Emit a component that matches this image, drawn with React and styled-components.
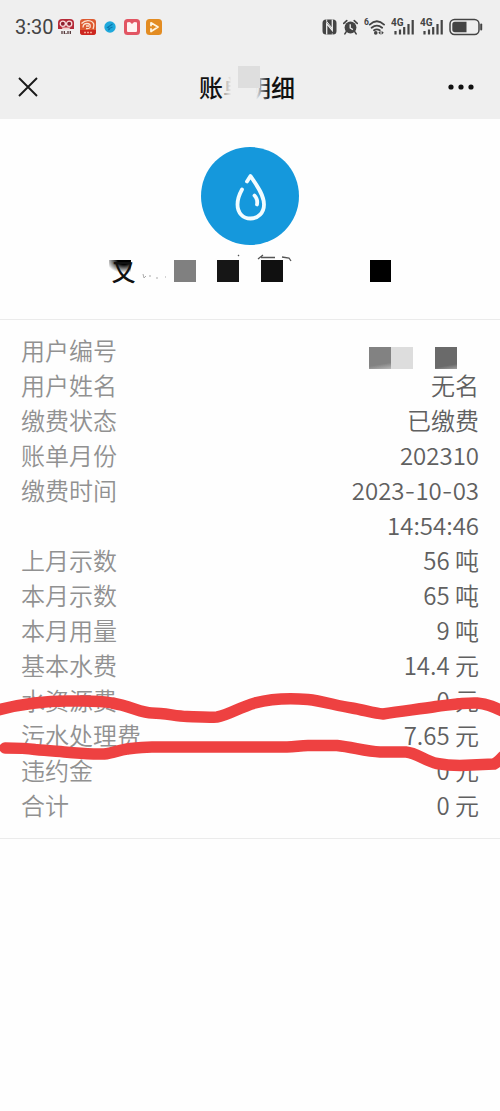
import React from "react";
import styled, { createGlobalStyle } from "styled-components";

const GlobalStyle = createGlobalStyle`
  * { box-sizing: border-box; }
  body {
    margin: 0;
    background: #fefefe;
    font-family: "Noto Sans CJK SC", sans-serif;
    overflow-x: hidden;
  }
`;

const Page = styled.main`
  position: relative;
  min-height: 100vh;
  background: #fefefe;
`;

const TopArea = styled.header`
  background: #efefef;
`;

const StatusBar = styled.div`
  display: flex;
  align-items: center;
  justify-content: space-between;
  height: 54px;
  padding: 0 17px 0 15px;
`;

const StatusGroup = styled.div`
  display: flex;
  align-items: center;
  gap: 6px;
`;

const Clock = styled.time`
  font: 400 20px/24px Roboto, sans-serif;
  color: #444;
  width: 37px;
  white-space: nowrap;
`;

const NavBar = styled.nav`
  display: flex;
  align-items: center;
  justify-content: space-between;
  height: 65px;
  padding: 0 23px 0 12px;
`;

const IconButton = styled.button`
  display: grid;
  place-items: center;
  width: 32px;
  height: 32px;
  padding: 0;
  border: 0;
  background: none;
`;

const Title = styled.h1`
  position: relative;
  margin: 0 0 0 5px;
  font-size: 24px;
  line-height: 30px;
  font-weight: 500;
  color: #111;
`;

const TitleFade = styled.span`
  position: absolute;
  inset: 0 26px 0 24px;
  background: linear-gradient(90deg, rgba(239, 239, 239, 0.6), #efefef 18%, #efefef 72%, rgba(239, 239, 239, 0));
`;

const TitleBlock = styled.span`
  position: absolute;
  left: 39px;
  top: -6px;
  width: 22px;
  height: 22px;
  background: #dedede;
`;

const Hero = styled.section`
  display: flex;
  flex-direction: column;
  align-items: center;
  gap: 15px;
  padding: 28px 0 37px;
  border-bottom: 1px solid #ebebeb;
`;

const Badge = styled.svg`
  display: block;
  width: 98px;
  height: 98px;
`;

const NameMosaic = styled.div`
  position: relative;
  display: grid;
  grid-template-columns: repeat(13, minmax(0, 1fr));
  width: 283px;
  height: 22px;
`;

const Cell = styled.span`
  height: 22px;
  background: ${(p) => p.$fill || "transparent"};
`;

const NameGlyph = styled.span`
  width: 28px;
  height: 22px;
  padding-left: 3px;
  font-size: 24px;
  line-height: 22px;
  font-weight: 500;
  color: #111;
  background: radial-gradient(ellipse 18px 13px at 15px 0, #000 35%, rgba(0, 0, 0, 0) 100%) no-repeat 0 0 / 22px 22px;
`;

const NameTraces = styled.svg`
  position: absolute;
  left: 0;
  top: -8px;
  width: 283px;
  height: 32px;
`;

const Details = styled.dl`
  position: relative;
  margin: 0;
  padding: 14px 21px;
  border-bottom: 1px solid #ebebeb;
`;

const Row = styled.div`
  display: flex;
  justify-content: space-between;
  font-size: 24px;
  font-weight: 350;
  line-height: 35px;
`;

const Label = styled.dt`
  height: 35px;
  line-height: 32px;
  color: #919191;
`;

const Value = styled.dd`
  display: flex;
  flex-direction: column;
  align-items: flex-end;
  justify-content: flex-end;
  margin: 0;
  color: #606060;
`;

const Line = styled.span`
  display: block;
  height: 35px;
  line-height: 32px;
`;

const WideDash = styled.span`
  font-family: Inter, sans-serif;
  line-height: 1;
`;

const ValueMosaic = styled.span`
  display: grid;
  grid-template-columns: repeat(5, 22px);
`;

const Marker = styled.svg`
  position: absolute;
  left: 0;
  top: 370px;
  width: 100%;
  height: 90px;
  pointer-events: none;
`;

const rows = [
  ["用户姓名", ["无名"]],
  ["缴费状态", ["已缴费"]],
  ["账单月份", ["202310"]],
  ["缴费时间", ["2023-10-03", "14:54:46"]],
  ["上月示数", ["56 吨"]],
  ["本月示数", ["65 吨"]],
  ["本月用量", ["9 吨"]],
  ["基本水费", ["14.4 元"]],
  ["水资源费", ["0 元"]],
  ["污水处理费", ["7.65 元"]],
  ["违约金", ["0 元"]],
  ["合计", ["0 元"]],
];

const nameCells = { 3: "#808080", 5: "#161616", 7: "#101010", 12: "#000" };

function withWideDashes(text) {
  return text.split("-").map((part, i) => (
    <React.Fragment key={i}>
      {i > 0 && <WideDash>-</WideDash>}
      {part}
    </React.Fragment>
  ));
}

function AppIcons() {
  return (
    <>
      <svg width="16" height="16" viewBox="0 0 16 16">
        <path d="M0 10V4q0-4 4-4h8q4 0 4 4v6z" fill="#b52a38" />
        <circle cx="4.8" cy="4.8" r="2.600" fill="#8e2030" stroke="#f7dcdc" strokeWidth="1.300" />
        <circle cx="11.2" cy="4.8" r="2.600" fill="#8e2030" stroke="#f7dcdc" strokeWidth="1.300" />
        <path d="M3.500 8.500h9L11 10.500H5z" fill="#f3d0d0" />
        <path d="M4 12v3M6.300 12v3M10 12v3M12.300 12v3" stroke="#4a2a2c" strokeWidth="1.200" />
        <path d="M7.600 14.500h1" stroke="#4a2a2c" />
      </svg>
      <svg width="16" height="16" viewBox="0 0 16 16">
        <rect width="16" height="16" rx="3" fill="#dd5a30" />
        <path d="M0 11h16v2q0 3-3 3H3q-3 0-3-3z" fill="#cc2620" />
        <path d="M1.500 4.500q4-4 9-2.500T13 10M3 8.500q0-4 4-4t3 4q-1 1.500-4 1M6 7h3" fill="none" stroke="#fbe3cf" strokeWidth="1.300" />
        <path d="M4 13.500h2M7 13.500h2M10 13.500h2" stroke="#f4a58f" strokeWidth="1.500" />
      </svg>
      <svg width="16" height="16" viewBox="0 0 16 16">
        <circle cx="8" cy="8" r="5.700" fill="#1fa9dc" />
        <path d="M10.500 5L5.500 8.500l2 1 3-1.500M8 10l-2 1" fill="none" stroke="#0b78ad" strokeWidth="1.100" />
      </svg>
      <svg width="16" height="16" viewBox="0 0 16 16">
        <rect width="16" height="16" rx="3.500" fill="#e25563" />
        <path d="M3 3.500q2.500-1 3.500 0L8 5l1.500-1.500q1-1 3.500 0V12q0 1-1 1H4q-1 0-1-1z" fill="#fff2f2" />
      </svg>
      <svg width="16" height="16" viewBox="0 0 16 16">
        <rect width="16" height="16" rx="3.500" fill="#e38c22" />
        <path d="M5 6.500V3.800l7 4.200-7 4.500v-2.500" fill="none" stroke="#fff4df" strokeWidth="1.800" strokeLinejoin="round" strokeLinecap="round" />
      </svg>
    </>
  );
}

function Signal() {
  return (
    <svg width="23" height="18" viewBox="0 0 23 18">
      <text x="0" y="8" fontFamily="Roboto, sans-serif" fontSize="10" fontWeight="700" fill="#444">4G</text>
      <path d="M4.500 16.500v-3.500M9 16.500v-5M13.200 16.500V9M17.500 16.500V6M21.700 16.500V2" stroke="#444" strokeWidth="2.200" />
    </svg>
  );
}

function SystemIcons() {
  return (
    <>
      <svg width="15" height="16" viewBox="0 0 15 16">
        <rect x="0.500" y="0.500" width="14" height="15" rx="3.500" fill="#444" />
        <path d="M4.700 15.500V4.500l5.600 7V.500" fill="none" stroke="#efefef" strokeWidth="1.300" />
        <path d="M4.700.500v2l5.600 7M10.300 15.500v-1" fill="none" stroke="#efefef" strokeWidth="1" />
      </svg>
      <svg width="15" height="16" viewBox="0 0 16 16">
        <circle cx="8" cy="8.500" r="6.300" fill="#444" />
        <path d="M.8 4.200L4 1.200M15.200 4.200L12 1.200M3.500 13L2 15.300M12.500 13l1.500 2.300" stroke="#444" strokeWidth="1.700" strokeLinecap="round" />
        <path d="M7.700 5v4l2.800 1.800" fill="none" stroke="#efefef" strokeWidth="1.400" />
      </svg>
      <svg width="21" height="18" viewBox="0 0 22 18">
        <text x="0" y="7" fontFamily="Roboto, sans-serif" fontSize="9" fontWeight="700" fill="#444">6</text>
        <path d="M6 6.500Q13.500-.5 21 6.500M8 9.800q5.500-4.600 11 0M10.500 12.500q3-2 6 0" fill="none" stroke="#444" strokeWidth="1.900" strokeLinecap="round" />
        <circle cx="12.300" cy="15.200" r="1.900" fill="#444" />
        <path d="M15 15l2.300-2v4zM20.700 15l-2.300-2v4z" fill="#444" />
      </svg>
      <Signal />
      <Signal />
      <svg width="34" height="18" viewBox="0 0 34 18">
        <rect x="1" y="1.500" width="29" height="15" rx="4.500" fill="none" stroke="#444" strokeWidth="1.500" />
        <path d="M6 3.800h11.500v10.400H6q-2.700 0-2.700-2.700v-5q0-2.700 2.700-2.700z" fill="#444" />
        <path d="M32.200 6.500v5" stroke="#444" strokeWidth="2" strokeLinecap="round" />
      </svg>
    </>
  );
}

export default function App() {
  return (
    <Page>
      <GlobalStyle />
      <TopArea>
        <StatusBar>
          <StatusGroup>
            <Clock>3:30</Clock>
            <AppIcons />
          </StatusGroup>
          <StatusGroup>
            <SystemIcons />
          </StatusGroup>
        </StatusBar>
        <NavBar>
          <IconButton aria-label="关闭">
            <svg width="20" height="20" viewBox="0 0 20 20">
              <path d="M1 1l18 18M19 1L1 19" stroke="#1a1a1a" strokeWidth="1.900" />
            </svg>
          </IconButton>
          <Title>
            账单明细
            <TitleFade />
            <TitleBlock />
          </Title>
          <IconButton aria-label="更多">
            <svg width="26" height="6" viewBox="0 0 26 6">
              <circle cx="3" cy="3" r="2.600" fill="#111" />
              <circle cx="13" cy="3" r="2.600" fill="#111" />
              <circle cx="23" cy="3" r="2.600" fill="#111" />
            </svg>
          </IconButton>
        </NavBar>
      </TopArea>

      <Hero>
        <Badge viewBox="0 0 98 98">
          <circle cx="49" cy="49" r="49" fill="#1598dc" />
          <path
            d="M46 34.500L49.500 29C54 36 63 47 63 57.500C63 66 57 71.500 49.500 71.500S36.500 66 36.500 57.500C36.500 52 38.500 47 41 42.500M53.500 48.500q3.500 3.500 2.500 9"
            fill="none" stroke="#f2fcff" strokeWidth="3.800" strokeLinecap="round" strokeLinejoin="round"
          />
        </Badge>
        <NameMosaic>
          <NameGlyph>又</NameGlyph>
          {Array.from({ length: 12 }, (_, i) => (
            <Cell key={i} $fill={nameCells[i + 1]} />
          ))}
          <NameTraces viewBox="0 0 283 32" fill="none" stroke="#555">
            <path d="M129 3l1 1" strokeWidth="1.200" />
            <path d="M149 7l5-4M152 5.500h14M173 5l7 1 2 3" strokeWidth="1.300" />
            <path d="M34 22l1 4 2-2M40 24h2M47 26h2M56 25h1" stroke="#aaa" />
          </NameTraces>
        </NameMosaic>
      </Hero>

      <Details>
        <Row>
          <Label>用户编号</Label>
          <Value>
            <ValueMosaic>
              <Cell $fill="linear-gradient(170deg, #828282 75%, #b8b8b8)" />
              <Cell $fill="#dddddd" />
              <Cell />
              <Cell $fill="linear-gradient(170deg, #6a6a6a 80%, #a0a0a0)" />
              <Cell />
            </ValueMosaic>
          </Value>
        </Row>
        {rows.map(([label, lines]) => (
          <Row key={label}>
            <Label>{label}</Label>
            <Value>
              {lines.map((line) => (
                <Line key={line}>{withWideDashes(line)}</Line>
              ))}
            </Value>
          </Row>
        ))}
        <Marker viewBox="0 690 500 90" preserveAspectRatio="none" fill="none" stroke="#ee4141" strokeWidth="11.500" strokeLinecap="round" strokeLinejoin="round">
          <path d="M-6 711C20 704 45 701 67 701C85 701 98 700 112 703C130 706 142 713 152 713C165 713 175 716 187 716.500C200 717 208 717.500 217 717C229 715 240 707 255 703C270 699 290 698 308 699.500C322 701 338 706 352 708C364 710 374 713.500 383 714C402 711 420 709 436 706.500C450 705 462 702.500 477 703C488 704 495 707 506 713" />
          <path d="M5 748C15 748 25 748 35 749.500C50 751 60 751.500 70 752.500C82 753.500 92 754.500 104 754C113 753 119 750 127 749C135 748 142 747 152 747H287C295 747 300 745.500 308 745.500H337C352 747 366 751.500 380 752H406C417 753 425 761 437 763.500C445 765 452 765.500 460 765.500C472 765 484 764.500 494 764C498 762 501 758 506 754" />
        </Marker>
      </Details>
    </Page>
  );
}
